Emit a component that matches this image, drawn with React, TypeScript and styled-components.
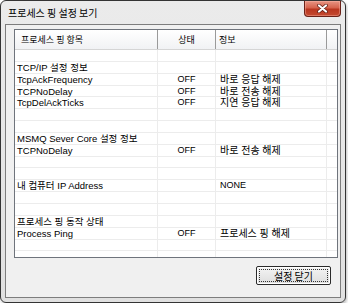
import React from "react";
import styled, { createGlobalStyle } from "styled-components";

const GlobalStyle = createGlobalStyle`
  body {
    margin: 0;
    background: #ffffff;
    font-family: "Liberation Sans", "Noto Sans CJK KR", sans-serif;
  }
`;

const Window = styled.div`
  box-sizing: border-box;
  width: 346px;
  height: 303px;
  border: 1px solid #343434;
  border-radius: 6px;
  background: linear-gradient(#ebebeb, #e0e0e0);
  padding: 0 4px 4px 4px;
  display: flex;
  flex-direction: column;
  box-shadow: 1px 2px 3px rgba(0, 0, 0, 0.25);
`;

const TitleBar = styled.div`
  height: 23px;
  display: flex;
  justify-content: space-between;
  align-items: flex-start;
`;

const Title = styled.span`
  font-family: "Noto Sans CJK KR", sans-serif;
  font-size: 10px;
  line-height: 23px;
  color: #000;
  padding-left: 3px;
`;

const CloseButton = styled.div`
  box-sizing: border-box;
  width: 37px;
  height: 16px;
  border: 1px solid #6a2118;
  border-top: none;
  border-radius: 0 0 4px 4px;
  background: linear-gradient(#e79584 0%, #d5634d 45%, #b9361f 55%, #c44a30 100%);
  display: flex;
  align-items: center;
  justify-content: center;
  box-shadow: inset 0 0 0 1px rgba(255, 190, 175, 0.4);
`;

const Client = styled.div`
  flex: 1;
  border: 1px solid #7d7d7d;
  background: #f0f0f0;
  padding: 4px 2px 0 8px;
  display: flex;
  flex-direction: column;
`;

const ListBox = styled.div`
  box-sizing: border-box;
  height: 229px;
  border: 1px solid #6f747c;
  background: #ffffff;
  overflow: hidden;
`;

const Columns = "143px 58px 111px 1fr";

const HeaderRow = styled.div`
  box-sizing: border-box;
  height: 20px;
  display: grid;
  grid-template-columns: ${Columns};
  background: linear-gradient(#ffffff, #f1f2f4);
  border-bottom: 1px solid #d5d5d5;
`;

const HeaderCell = styled.div<{ $align?: string; $pad?: number }>`
  box-sizing: border-box;
  font-family: "Noto Sans CJK KR", sans-serif;
  font-size: 9px;
  line-height: 19px;
  color: #000;
  text-align: ${(p) => p.$align || "left"};
  padding-left: ${(p) => p.$pad ?? 0}px;
  border-right: 1px solid #9a9a9a;
  white-space: nowrap;
  &:last-child {
    border-right: none;
  }
`;

const Row = styled.div`
  box-sizing: border-box;
  height: 11.85px;
  display: grid;
  grid-template-columns: ${Columns};
  border-bottom: 1px solid #ececec;
`;

const Cell = styled.div<{ $align?: string; $pad?: number; $size?: number }>`
  box-sizing: border-box;
  font-size: ${(p) => p.$size ?? 9.5}px;
  line-height: 11px;
  color: #000;
  text-align: ${(p) => p.$align || "left"};
  padding-left: ${(p) => p.$pad ?? 0}px;
  border-right: 1px solid #ececec;
  white-space: nowrap;
  overflow: visible;
  &:last-child {
    border-right: none;
  }
`;

const Footer = styled.div`
  display: flex;
  justify-content: flex-end;
  padding: 8px 7px 0 0;
`;

const Button = styled.button`
  box-sizing: border-box;
  width: 75px;
  height: 19px;
  padding: 2px;
  border: 1px solid #2a2a2a;
  border-radius: 2px;
  background: linear-gradient(#f4f4f4, #dddddd);
  box-shadow: inset 0 0 0 1px #ffffff;
  display: flex;
`;

const FocusRing = styled.span`
  flex: 1;
  border: 1px dotted #333;
  font-family: "Noto Sans CJK KR", sans-serif;
  font-size: 10px;
  line-height: 11px;
  color: #000;
  display: flex;
  align-items: center;
  justify-content: center;
`;

type Item = { name?: string; state?: string; info?: string };

const items: Item[] = [
  {},
  { name: "TCP/IP 설정 정보" },
  { name: "TcpAckFrequency", state: "OFF", info: "바로 응답 해제" },
  { name: "TCPNoDelay", state: "OFF", info: "바로 전송 해제" },
  { name: "TcpDelAckTicks", state: "OFF", info: "지연 응답 해제" },
  {},
  {},
  { name: "MSMQ Sever Core 설정 정보" },
  { name: "TCPNoDelay", state: "OFF", info: "바로 전송 해제" },
  {},
  {},
  { name: "내 컴퓨터 IP Address", info: "NONE" },
  {},
  {},
  { name: "프로세스 핑 동작 상태" },
  { name: "Process Ping", state: "OFF", info: "프로세스 핑 해제" },
  {},
  {},
];

const CloseIcon = () => (
  <svg width="11" height="9" viewBox="0 0 11 9">
    <path d="M2 1.5 L9 7.5 M9 1.5 L2 7.5" stroke="#5a1a12" strokeWidth="3.6" strokeLinecap="round" />
    <path d="M2 1.5 L9 7.5 M9 1.5 L2 7.5" stroke="#ffffff" strokeWidth="2.2" strokeLinecap="round" />
  </svg>
);

export default function App() {
  return (
    <>
      <GlobalStyle />
      <Window>
        <TitleBar>
          <Title>프로세스 핑 설정 보기</Title>
          <CloseButton>
            <CloseIcon />
          </CloseButton>
        </TitleBar>
        <Client>
          <ListBox>
            <HeaderRow>
              <HeaderCell $pad={6}>프로세스 핑 항목</HeaderCell>
              <HeaderCell $align="center">상태</HeaderCell>
              <HeaderCell $pad={3}>정보</HeaderCell>
              <HeaderCell />
            </HeaderRow>
            {items.map((it, i) => (
              <Row key={i}>
                <Cell $pad={2}>{it.name}</Cell>
                <Cell $align="center" $size={9}>{it.state}</Cell>
                <Cell $pad={4} $size={it.info === "NONE" ? 9 : 10}>{it.info}</Cell>
                <Cell />
              </Row>
            ))}
          </ListBox>
          <Footer>
            <Button>
              <FocusRing>설정 닫기</FocusRing>
            </Button>
          </Footer>
        </Client>
      </Window>
    </>
  );
}
